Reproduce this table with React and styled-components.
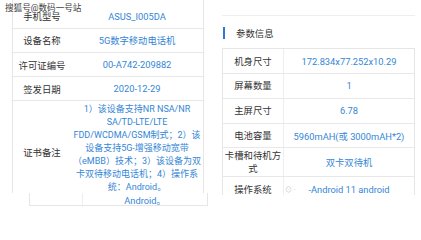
import styled, { createGlobalStyle } from 'styled-components'

const GlobalStyle = createGlobalStyle`
    html, body {
        margin: 0;
        padding: 0;
        background: #ffffff;
    }
    body {
        font-family: Roboto, "Noto Sans CJK SC", sans-serif;
    }
`

const certRows = [
    { label: '手机型号', value: 'ASUS_I005DA', height: 28.5, top: 5 },
    { label: '设备名称', value: '5G数字移动电话机', height: 24.5 },
    { label: '许可证编号', value: '00-A742-209882', height: 24 },
    { label: '签发日期', value: '2020-12-29', height: 24 },
]

const noteLines = [
    '1）该设备支持NR NSA/NR',
    'SA/TD-LTE/LTE',
    'FDD/WCDMA/GSM制式；2）该',
    '设备支持5G-增强移动宽带',
    '（eMBB）技术；3）该设备为双',
    '卡双待移动电话机；4）操作系',
    '统：Android。',
]

const paramRows = [
    { label: '机身尺寸', value: '172.834x77.252x10.29', height: 25 },
    { label: '屏幕数量', value: '1', height: 24.5 },
    { label: '主屏尺寸', value: '6.78', height: 25.5 },
    { label: '电池容量', value: '5960mAH(或 3000mAH*2)', height: 24 },
    { label: '卡槽和待机方式', value: '双卡双待机', height: 29 },
    { label: '操作系统', value: '-Android 11 android', height: 25, mark: true },
]

export default function App () {
    return (
        <Page>
            <GlobalStyle />

            <LeftColumn>
                <CertTable>
                    {certRows.map((row) => (
                        <CertRow key={row.label} $height={row.height} $top={row.top || 0}>
                            <CertLabel>{row.label}</CertLabel>
                            <Value>{row.value}</Value>
                        </CertRow>
                    ))}

                    <NoteRow>
                        <CertLabel $shift={4}>证书备注</CertLabel>
                        <NoteText>
                            {noteLines.map((line) => (
                                <NoteLine key={line}>{line}</NoteLine>
                            ))}
                        </NoteText>
                    </NoteRow>
                </CertTable>

                <Strip>
                    <StripLabel />
                    <Value>Android。</Value>
                </Strip>
            </LeftColumn>

            <RightColumn>
                <TopRule />

                <SectionHeader>
                    <AccentBar />
                    <SectionTitle>参数信息</SectionTitle>
                </SectionHeader>

                <ParamTable>
                    {paramRows.map((row) => (
                        <ParamRow key={row.label} $height={row.height}>
                            <ParamLabel>{row.label}</ParamLabel>
                            <ParamValue>
                                {row.mark && <Mark>⊙ ·</Mark>}
                                {row.value}
                            </ParamValue>
                        </ParamRow>
                    ))}
                </ParamTable>
            </RightColumn>

            <Watermark>搜狐号@数码一号站</Watermark>
        </Page>
    )
}

const Page = styled.div`
    position: relative;
    width: 421px;
    height: 240px;
    overflow: hidden;
    display: flex;
    align-items: flex-start;
    background: #ffffff;
`

const LeftColumn = styled.div`
    margin-left: 12px;
    width: 192px;
    display: flex;
    flex-direction: column;
`

const CertTable = styled.div`
    border-left: 1px solid #e6e6e6;
    border-right: 1px solid #e6e6e6;
`

const CertRow = styled.div`
    display: grid;
    grid-template-columns: 58px 1fr;
    align-items: center;
    box-sizing: border-box;
    height: ${(p) => p.$height}px;
    padding-top: ${(p) => p.$top}px;
    border-bottom: 1px solid #e8e8e8;
`

const CertLabel = styled.div`
    text-align: center;
    font-size: 9.4px;
    color: #333333;
    white-space: nowrap;
    position: relative;
    top: ${(p) => p.$shift || 0}px;
`

const Value = styled.div`
    text-align: center;
    font-size: 9.3px;
    color: #3486d6;
    white-space: nowrap;
`

const NoteRow = styled.div`
    display: grid;
    grid-template-columns: 58px 1fr;
    align-items: center;
    height: 92px;
`

const NoteText = styled.div`
    display: flex;
    flex-direction: column;
    align-items: center;
    padding-top: 2px;
`

const NoteLine = styled.span`
    font-size: 9px;
    line-height: 13px;
    color: #3486d6;
    white-space: nowrap;
`

const Strip = styled.div`
    margin-left: 17px;
    width: 179px;
    height: 13px;
    box-sizing: border-box;
    display: grid;
    grid-template-columns: 53px 1fr;
    align-items: center;
    border: 1px solid #e6e6e6;
    border-top: none;
`

const StripLabel = styled.div`
    height: 100%;
    border-right: 1px solid #efefef;
`

const RightColumn = styled.div`
    margin-left: 18px;
    width: 193px;
    display: flex;
    flex-direction: column;
`

const TopRule = styled.div`
    height: 15px;
    border-bottom: 1px solid #efefef;
`

const SectionHeader = styled.div`
    height: 32px;
    display: flex;
    align-items: center;
    padding-top: 1px;
    box-sizing: border-box;
`

const AccentBar = styled.span`
    width: 2px;
    height: 12px;
    margin-left: 1px;
    background: #2a78d4;
`

const SectionTitle = styled.span`
    margin-left: 11px;
    font-size: 9.4px;
    color: #333333;
`

const ParamTable = styled.div`
    height: 146px;
    overflow: hidden;
    border: 1px solid #e6e6e6;
    border-bottom: none;
`

const ParamRow = styled.div`
    display: grid;
    grid-template-columns: 61px 1fr;
    box-sizing: border-box;
    height: ${(p) => p.$height}px;
    border-bottom: 1px solid #e8e8e8;
`

const ParamLabel = styled.div`
    display: flex;
    align-items: center;
    justify-content: center;
    text-align: center;
    padding: 0;
    font-size: 9.4px;
    line-height: 13px;
    color: #333333;
    border-right: 1px solid #eeeeee;
    word-break: break-all;
`

const ParamValue = styled.div`
    position: relative;
    display: flex;
    align-items: center;
    justify-content: center;
    font-size: 9.3px;
    color: #3486d6;
    white-space: nowrap;
`

const Mark = styled.span`
    position: absolute;
    left: 1px;
    font-size: 7px;
    color: #c4c4c4;
`

const Watermark = styled.div`
    position: absolute;
    top: 1px;
    left: 5px;
    font-size: 8.6px;
    color: #3c3c3c;
    text-shadow: 0 0 1px #ffffff;
    white-space: nowrap;
`
